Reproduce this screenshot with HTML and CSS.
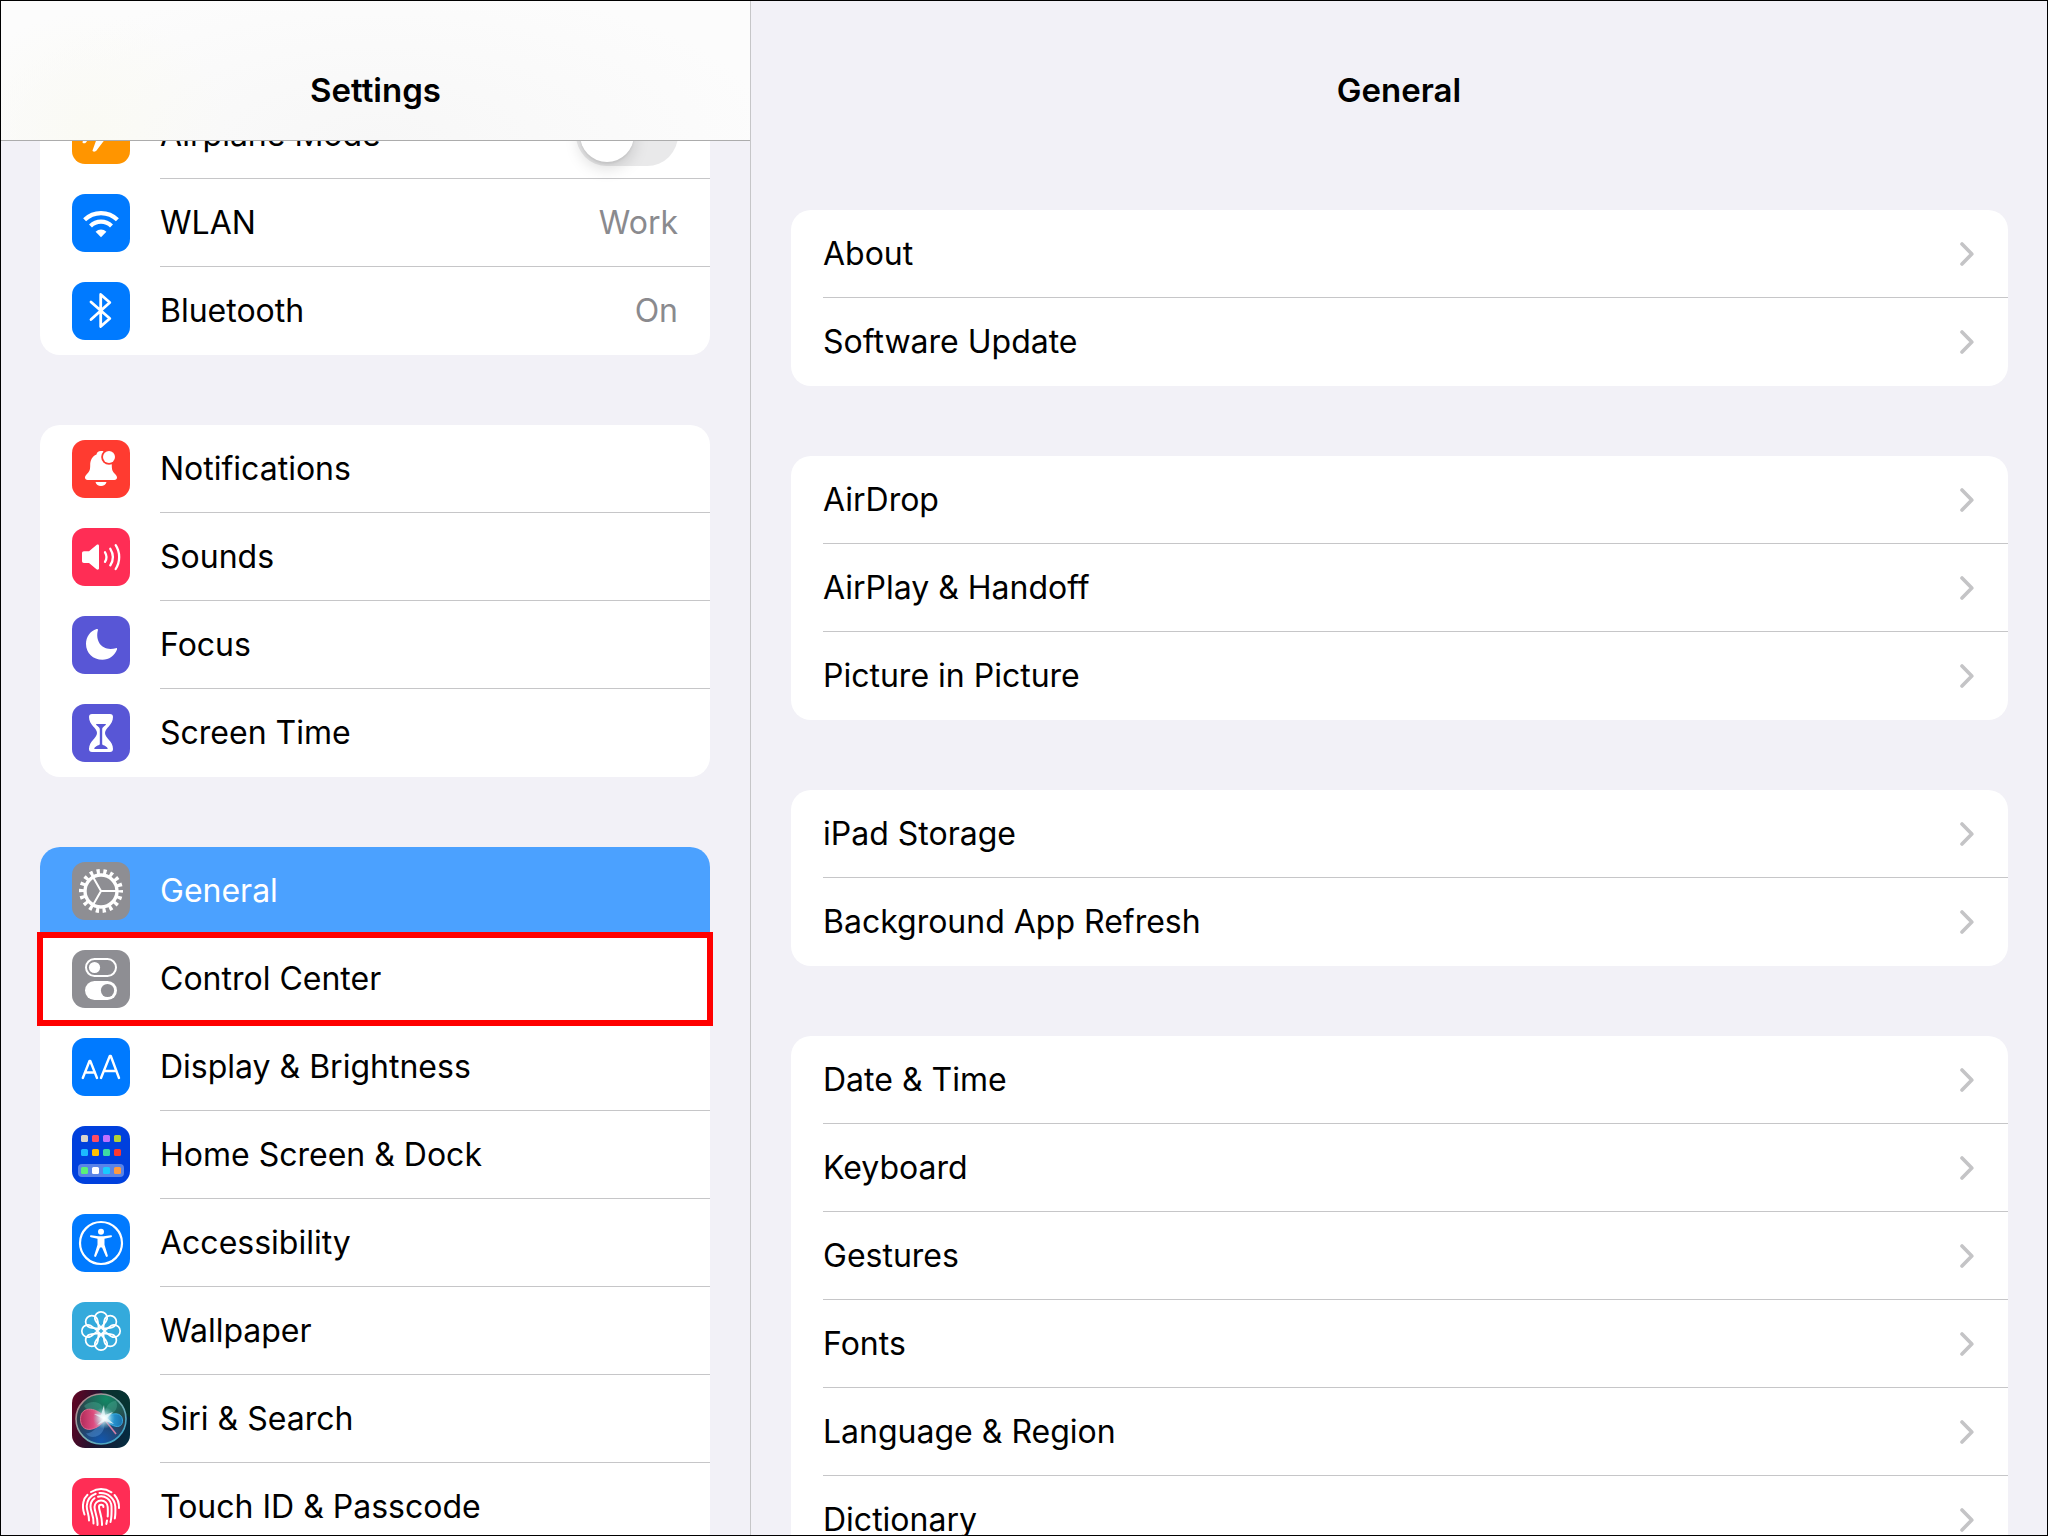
FILE: index.html
```html
<!DOCTYPE html>
<html lang="en">
<head>
<meta charset="utf-8">
<meta name="viewport" content="width=device-width, initial-scale=1">
<title>Settings</title>
<link rel="stylesheet" href="styles.css">
</head>
<body>
<div class="app">
  <aside class="sidebar">
    <header class="bar bar-blur"><h1 class="title">Settings</h1></header>
    <nav class="scroller" aria-label="Settings">
      <ul class="card">
        <li class="row">
          <svg class="icon" viewBox="0 0 58 58"><rect width="58" height="58" fill="#ff9500"/><path fill="#fff" d="M48 29c0-2-4-3-7-3H34L25 11h-4l4 15H17l-4-5H10l2 8L10.500 36.500c0 1 2.500 1.200 3.500 0L17 32h8l-4.500 12.500c0 1.500 3 1.500 4 0L34 32h7c3 0 7-1 7-3z"/></svg>
          <label class="cell" for="airplane"><span class="name">Airplane Mode</span><input class="switch" type="checkbox" id="airplane"></label>
        </li>
        <li><a class="row" href="#wlan">
          <svg class="icon" viewBox="0 0 58 58"><rect width="58" height="58" fill="#007aff"/><g fill="none" stroke="#fff" stroke-width="4.200"><path d="M12.600 25.800a23.500 23.500 0 0 1 32.800 0"/><path d="M18.500 32a15 15 0 0 1 21 0"/></g><path fill="#fff" d="M29 43.200l-5.400-5.500a8 8 0 0 1 10.800 0z"/></svg>
          <span class="cell"><span class="name">WLAN</span><span class="value">Work</span></span></a></li>
        <li><a class="row" href="#bluetooth">
          <svg class="icon" viewBox="0 0 58 58"><rect width="58" height="58" fill="#007aff"/><path fill="none" stroke="#fff" stroke-width="2.800" stroke-linejoin="round" stroke-linecap="round" d="M19 20L37.800 36.500 28.700 44.500V12.500L37.800 20.500 19 37.500"/></svg>
          <span class="cell"><span class="name">Bluetooth</span><span class="value">On</span></span></a></li>
      </ul>
      <ul class="card">
        <li><a class="row" href="#notifications">
          <svg class="icon" viewBox="0 0 58 58"><rect width="58" height="58" fill="#ff3b30"/><path fill="#fff" d="M29 11c-3 0-4 1.500-4.500 3.500C20 16.500 18.200 20.500 18.200 25c0 5-.7 6.500-3.200 9-1.500 1.500-2 2.500-2 3.600 0 1.400 1 2.400 2.600 2.400h26.800c1.600 0 2.600-1 2.600-2.400 0-1.100-.5-2.100-2-3.600-2.500-2.500-3.200-4-3.200-9V20L31 11zM23.500 42h11c-.6 2.600-2.800 4-5.500 4s-4.900-1.400-5.500-4z"/><circle cx="37" cy="17" r="7.800" fill="#ff3b30"/><circle cx="37" cy="17" r="6" fill="#fff"/></svg>
          <span class="cell"><span class="name">Notifications</span></span></a></li>
        <li><a class="row" href="#sounds">
          <svg class="icon" viewBox="0 0 58 58"><rect width="58" height="58" fill="#ff2d55"/><path fill="#fff" d="M12 23.300h5L24.500 17c1-.8 2.500-.5 2.500 1v22.300c0 1.500-1.500 1.800-2.500 1L17 35h-5c-1.300 0-2-.7-2-2v-7.700c0-1.300.7-2 2-2z"/><g fill="none" stroke="#fff" stroke-width="2.300" stroke-linecap="round"><path d="M33 24.300a9 9 0 0 1 0 9.600"/><path d="M38.300 20.800a15.500 15.500 0 0 1 0 16.600"/><path d="M43.700 17.200a22 22 0 0 1 0 23.800"/></g></svg>
          <span class="cell"><span class="name">Sounds</span></span></a></li>
        <li><a class="row" href="#focus">
          <svg class="icon" viewBox="0 0 58 58"><rect width="58" height="58" fill="#5856d6"/><path fill="#fff" d="M24.600 13c1-.4 1.600.3 1.300 1.300C23.300 23.800 28.500 33 38.500 33c1.800 0 3.600-.2 5.300-.8 1-.3 1.500.3 1.200 1.300C42.500 39.800 37 43.800 30.500 43.800 21 43.800 14 37 14 28c0-7 4-12.800 10.600-15z"/></svg>
          <span class="cell"><span class="name">Focus</span></span></a></li>
        <li><a class="row" href="#screen-time">
          <svg class="icon" viewBox="0 0 58 58"><rect width="58" height="58" fill="#5856d6"/><path fill="#fff" d="M20 10h18c2 0 3 1 3 3 0 8-8 11-8 16s8 8 8 16c0 2-1 3-3 3H20c-2 0-3-1-3-3 0-8 8-11 8-16s-8-8-8-16c0-2 1-3 3-3z"/><path fill="#5856d6" d="M24 20h10c0 1.500-3.800 3-3.800 5v15.500c1 .8 5.500 2 5.500 4.500H22.300c0-2.500 4.500-3.700 5.500-4.500V25c0-2-3.800-3.500-3.800-5z"/></svg>
          <span class="cell"><span class="name">Screen Time</span></span></a></li>
      </ul>
      <ul class="card">
        <li><a class="row row-selected" href="#general" aria-current="page">
          <svg class="icon" viewBox="0 0 58 58"><rect width="58" height="58" fill="#8e8e93"/><circle cx="29" cy="29" r="19.500" fill="none" stroke="#fff" stroke-width="5" stroke-dasharray="3.200 3.606" stroke-dashoffset="1.600"/><circle cx="29" cy="29" r="16" fill="none" stroke="#fff" stroke-width="3.400"/><path fill="none" stroke="#fff" stroke-width="2" d="M29 29h16M29 29l-8-13.900M29 29l-8 13.900"/></svg>
          <span class="cell"><span class="name">General</span></span></a></li>
        <li class="highlighted"><a class="row" href="#control-center">
          <svg class="icon" viewBox="0 0 58 58"><rect width="58" height="58" fill="#8e8e93"/><rect x="14" y="9" width="30" height="17" rx="8.500" fill="none" stroke="#fff" stroke-width="2"/><circle cx="22.500" cy="17.500" r="5.600" fill="#fff"/><rect x="13" y="31" width="32" height="19" rx="9.500" fill="#fff"/><circle cx="35.500" cy="40.500" r="6.600" fill="#8e8e93"/></svg>
          <span class="cell"><span class="name">Control Center</span></span></a></li>
        <li><a class="row" href="#display">
          <svg class="icon" viewBox="0 0 58 58"><rect width="58" height="58" fill="#007aff"/><g fill="none" stroke="#fff" stroke-linecap="round" stroke-linejoin="round" stroke-width="2.400"><path d="M10.800 40L17.500 23h.8L25 40M13 34.500h10"/><path d="M29 40L37.800 18h1L47 40M31.800 33h12.700"/></g></svg>
          <span class="cell"><span class="name">Display &amp; Brightness</span></span></a></li>
        <li><a class="row" href="#home-screen">
          <svg class="icon" viewBox="0 0 58 58"><rect width="58" height="58" fill="#0040dd"/><rect x="6" y="38" width="46" height="13" rx="4" fill="#5a84e8"/><g><rect x="9" y="9" width="7" height="7" rx="1.500" fill="#d8d4cc"/><rect x="20" y="9" width="7" height="7" rx="1.500" fill="#ff4c61"/><rect x="31" y="9" width="7" height="7" rx="1.500" fill="#bf70ff"/><rect x="42" y="9" width="7" height="7" rx="1.500" fill="#b0d136"/><rect x="9" y="23" width="7" height="7" rx="1.500" fill="#1cb8ff"/><rect x="20" y="23" width="7" height="7" rx="1.500" fill="#ffc000"/><rect x="31" y="23" width="7" height="7" rx="1.500" fill="#3dd9a4"/><rect x="42" y="23" width="7" height="7" rx="1.500" fill="#ff3830"/><rect x="9" y="41" width="7" height="7" rx="1.500" fill="#5bf077"/><rect x="20" y="41" width="7" height="7" rx="1.500" fill="#fff"/><rect x="31" y="41" width="7" height="7" rx="1.500" fill="#19cbff"/><rect x="42" y="41" width="7" height="7" rx="1.500" fill="#ff9a40"/></g></svg>
          <span class="cell"><span class="name">Home Screen &amp; Dock</span></span></a></li>
        <li><a class="row" href="#accessibility">
          <svg class="icon" viewBox="0 0 58 58"><rect width="58" height="58" fill="#007aff"/><circle cx="29" cy="29" r="21" fill="none" stroke="#fff" stroke-width="2.200"/><circle cx="29" cy="17.800" r="3" fill="#fff"/><path fill="#fff" d="M19 21.300l7.500 1h5l7.500-1c1.200-.1 1.400 1.600.2 1.900L32.500 24.800v6l3.300 10.800c.3 1.300-1.500 1.800-2 .6L30 33.500h-2l-3.800 8.700c-.5 1.200-2.300.7-2-.6L25.500 30.800v-6l-6.700-1.600c-1.200-.3-1-2 .2-1.900z"/></svg>
          <span class="cell"><span class="name">Accessibility</span></span></a></li>
        <li><a class="row" href="#wallpaper">
          <svg class="icon" viewBox="0 0 58 58"><rect width="58" height="58" fill="#34aadc"/><defs><path id="petal" d="M29 26C27 22 22.800 20 22.800 16a6.200 6.200 0 0 1 12.400 0C35.200 20 31 22 29 26z"/></defs><g fill="none" stroke="#fff" stroke-width="1.700"><use href="#petal"/><use href="#petal" transform="rotate(45 29 29)"/><use href="#petal" transform="rotate(90 29 29)"/><use href="#petal" transform="rotate(135 29 29)"/><use href="#petal" transform="rotate(180 29 29)"/><use href="#petal" transform="rotate(225 29 29)"/><use href="#petal" transform="rotate(270 29 29)"/><use href="#petal" transform="rotate(315 29 29)"/><circle cx="29" cy="29" r="3.300"/></g></svg>
          <span class="cell"><span class="name">Wallpaper</span></span></a></li>
        <li><a class="row" href="#siri">
          <svg class="icon" viewBox="0 0 58 58"><defs><linearGradient id="siri-bg" x1="0" y1=".4" x2="1" y2=".6"><stop offset="0" stop-color="#5c0624"/><stop offset=".45" stop-color="#1e1430"/><stop offset="1" stop-color="#052c40"/></linearGradient><linearGradient id="siri-ring" x1="0" x2="1" y1="0" y2="1"><stop offset="0" stop-color="#c07a80"/><stop offset=".5" stop-color="#7fb0b0"/><stop offset="1" stop-color="#2aa0d0"/></linearGradient><radialGradient id="siri-green" cx=".6" cy=".1" r=".6"><stop offset="0" stop-color="#128a66"/><stop offset="1" stop-color="#128a66" stop-opacity="0"/></radialGradient><radialGradient id="siri-blue" cx=".5" cy=".95" r=".6"><stop offset="0" stop-color="#1258b0"/><stop offset="1" stop-color="#1258b0" stop-opacity="0"/></radialGradient><linearGradient id="siri-pink"><stop offset="0" stop-color="#c02a5c"/><stop offset=".5" stop-color="#f04a80"/><stop offset="1" stop-color="#f8c8d8"/></linearGradient><linearGradient id="siri-cyan"><stop offset="0" stop-color="#d0f4ff"/><stop offset=".4" stop-color="#2aa0e0"/><stop offset="1" stop-color="#1878b8"/></linearGradient><radialGradient id="siri-glow"><stop offset="0" stop-color="#fff"/><stop offset=".3" stop-color="#e8f8fa" stop-opacity=".8"/><stop offset="1" stop-color="#80d0e0" stop-opacity="0"/></radialGradient></defs><rect width="58" height="58" fill="url(#siri-bg)"/><path fill="#06382f" fill-opacity=".75" d="M28 0h30v28z"/><circle cx="29" cy="29" r="25" fill="#2c3c4a"/><circle cx="29" cy="29" r="25" fill="url(#siri-green)"/><circle cx="29" cy="29" r="25" fill="url(#siri-blue)"/><path fill="#58b8a0" fill-opacity=".35" d="M32 29C24 24 14 20 12 16 20 8 36 12 32 29zM32 29c0-10 4-18 12-18 4 8-4 14-12 18z"/><path fill="#60a0e0" fill-opacity=".4" d="M32 29c-6 6-12 16-18 14 4 8 22 4 18-14z"/><path fill="url(#siri-pink)" fill-opacity=".9" stroke="#f07898" stroke-width=".8" d="M34 29C26 17 9 15 8.500 28.500 8 42 22 44 34 29z"/><path fill="url(#siri-cyan)" fill-opacity=".9" stroke="#40b8f0" stroke-width=".8" d="M32 28c8-6 18-6 18.500 2 .5 9-10 9-18.500-2z"/><path fill="none" stroke="#d080a8" stroke-width="1.600" d="M33 30l11 14"/><path fill="#fff" fill-opacity=".85" d="M31 29l-9-5 7 1 3-10 1 10 8-3-6 6 7 6-9-3-8 4z"/><circle cx="32" cy="28" r="11" fill="url(#siri-glow)"/><circle cx="29" cy="29" r="25" fill="none" stroke="url(#siri-ring)" stroke-width="1.600"/></svg>
          <span class="cell"><span class="name">Siri &amp; Search</span></span></a></li>
        <li><a class="row" href="#touch-id">
          <svg class="icon" viewBox="0 0 58 58"><rect width="58" height="58" fill="#ff2d55"/><g fill="none" stroke="#fff" stroke-width="2" stroke-linecap="round"><path d="M19 14a20 20 0 0 1 20.500.3"/><path d="M12.500 36.500C9 27 12 20 15.500 16.800M42.500 17c3 3.500 4.700 8 4.500 13"/><path d="M17 42.500C17 36 14.700 33 14.700 28a14 14 0 0 1 9-12.300M27.500 15a14.500 14.500 0 0 1 15.800 13.500c.2 4.500.2 8.500-.5 12"/><path d="M21.500 45.500c.5-8-3-12-3-17a10.500 10.500 0 0 1 4-8.300M26 18.700a10.500 10.500 0 0 1 13.500 9.800c.2 5.500.2 11-1 15.500"/><path d="M25.500 47c.6-8-3-13-3-18a6.600 6.600 0 0 1 13.200 0c.2 4 .2 7 0 9.500M35 42.500l-.7 3.500"/><path d="M30 47c.5-8-3-14-3-18a2.200 2.200 0 0 1 4.400 0"/></g></svg>
          <span class="cell"><span class="name">Touch ID &amp; Passcode</span></span></a></li>
      </ul>
    </nav>
  </aside>
  <main class="detail">
    <header class="bar"><h2 class="title">General</h2></header>
    <svg hidden><symbol id="chevron" viewBox="0 0 14 24"><path fill="none" stroke="#c4c4c6" stroke-width="3.600" stroke-linecap="round" stroke-linejoin="round" d="M2 2l9.800 10L2 22"/></symbol></svg>
    <div class="groups">
      <ul class="card">
        <li><a class="row" href="#about"><span class="cell">About<svg class="chevron"><use href="#chevron"/></svg></span></a></li>
        <li><a class="row" href="#update"><span class="cell">Software Update<svg class="chevron"><use href="#chevron"/></svg></span></a></li>
      </ul>
      <ul class="card">
        <li><a class="row" href="#airdrop"><span class="cell">AirDrop<svg class="chevron"><use href="#chevron"/></svg></span></a></li>
        <li><a class="row" href="#airplay"><span class="cell">AirPlay &amp; Handoff<svg class="chevron"><use href="#chevron"/></svg></span></a></li>
        <li><a class="row" href="#pip"><span class="cell">Picture in Picture<svg class="chevron"><use href="#chevron"/></svg></span></a></li>
      </ul>
      <ul class="card">
        <li><a class="row" href="#storage"><span class="cell">iPad Storage<svg class="chevron"><use href="#chevron"/></svg></span></a></li>
        <li><a class="row" href="#refresh"><span class="cell">Background App Refresh<svg class="chevron"><use href="#chevron"/></svg></span></a></li>
      </ul>
      <ul class="card">
        <li><a class="row" href="#date"><span class="cell">Date &amp; Time<svg class="chevron"><use href="#chevron"/></svg></span></a></li>
        <li><a class="row" href="#keyboard"><span class="cell">Keyboard<svg class="chevron"><use href="#chevron"/></svg></span></a></li>
        <li><a class="row" href="#gestures"><span class="cell">Gestures<svg class="chevron"><use href="#chevron"/></svg></span></a></li>
        <li><a class="row" href="#fonts"><span class="cell">Fonts<svg class="chevron"><use href="#chevron"/></svg></span></a></li>
        <li><a class="row" href="#language"><span class="cell">Language &amp; Region<svg class="chevron"><use href="#chevron"/></svg></span></a></li>
        <li><a class="row" href="#dictionary"><span class="cell">Dictionary<svg class="chevron"><use href="#chevron"/></svg></span></a></li>
      </ul>
    </div>
  </main>
</div>
</body>
</html>
```
FILE: styles.css
```css
* { box-sizing: border-box; }

body {
  margin: 0;
  background: #f2f1f7;
  color: #000;
  font: 32px/40px Inter, "Liberation Sans", sans-serif;
}

.app {
  display: grid;
  grid-template-columns: 750px minmax(0, 1fr);
  height: 100vh;
  overflow: hidden;
  border: 1px solid #000;
}

.sidebar,
.detail {
  display: flex;
  flex-direction: column;
  min-height: 0;
  overflow: hidden;
}

.sidebar { border-right: 1px solid #c6c6c8; }

.bar {
  flex: none;
  display: flex;
  align-items: flex-end;
  justify-content: center;
  height: 140px;
  padding-bottom: 30px;
  border-bottom: 1px solid transparent;
}

.bar-blur {
  z-index: 1;
  background:
    radial-gradient(ellipse 140px 120px at 90px 130px, #fafaf4, transparent),
    radial-gradient(ellipse 400px 160px at 50% 100%, #f7f7f7, transparent),
    #fcfcfc;
  border-bottom-color: #acacac;
}

.title {
  margin: 0;
  font-size: 33px;
  line-height: 40px;
  font-weight: 600;
}

.scroller,
.groups {
  display: flex;
  flex-direction: column;
  gap: 70px;
}

/* The list is scrolled part of the way under the title bar. */
.scroller {
  margin-top: -50px;
  padding: 0 40px 0 39px;
}

.groups { padding: 69px 39px 0 40px; }

.card {
  margin: 0;
  padding: 0;
  list-style: none;
  border-radius: 20px;
  background: #fff;
}

.row {
  display: flex;
  align-items: center;
  gap: 30px;
  height: 88px;
  padding-left: 32px;
  color: inherit;
  text-decoration: none;
}

.row-selected {
  border-radius: 20px 20px 0 0;
  background: #4ba1ff;
  color: #fff;
}

.icon {
  flex: none;
  width: 58px;
  height: 58px;
  border-radius: 13px;
}

.cell {
  flex: 1;
  display: flex;
  align-items: center;
  justify-content: space-between;
  height: 88px;
  padding-right: 32px;
  border-bottom: 1px solid #c6c6c8;
}

.card > li:last-child .cell,
.row-selected .cell,
.highlighted .cell { border-bottom-color: transparent; }

.value { color: #8a8a8e; }

.chevron {
  width: 14px;
  height: 24px;
  margin-right: 2px;
}

.switch {
  appearance: none;
  width: 102px;
  height: 62px;
  margin: 0;
  padding: 4px;
  border-radius: 31px;
  background: #e9e9ea;
}

.switch::before {
  content: "";
  display: block;
  width: 54px;
  height: 54px;
  border-radius: 50%;
  background: #fff;
  box-shadow: 0 6px 16px rgba(0, 0, 0, .15), 0 2px 2px rgba(0, 0, 0, .06);
}

.switch:checked { background: #34c759; }
.switch:checked::before { margin-left: auto; }

.highlighted {
  outline: 6px solid #f00;
  outline-offset: -3px;
}
```
